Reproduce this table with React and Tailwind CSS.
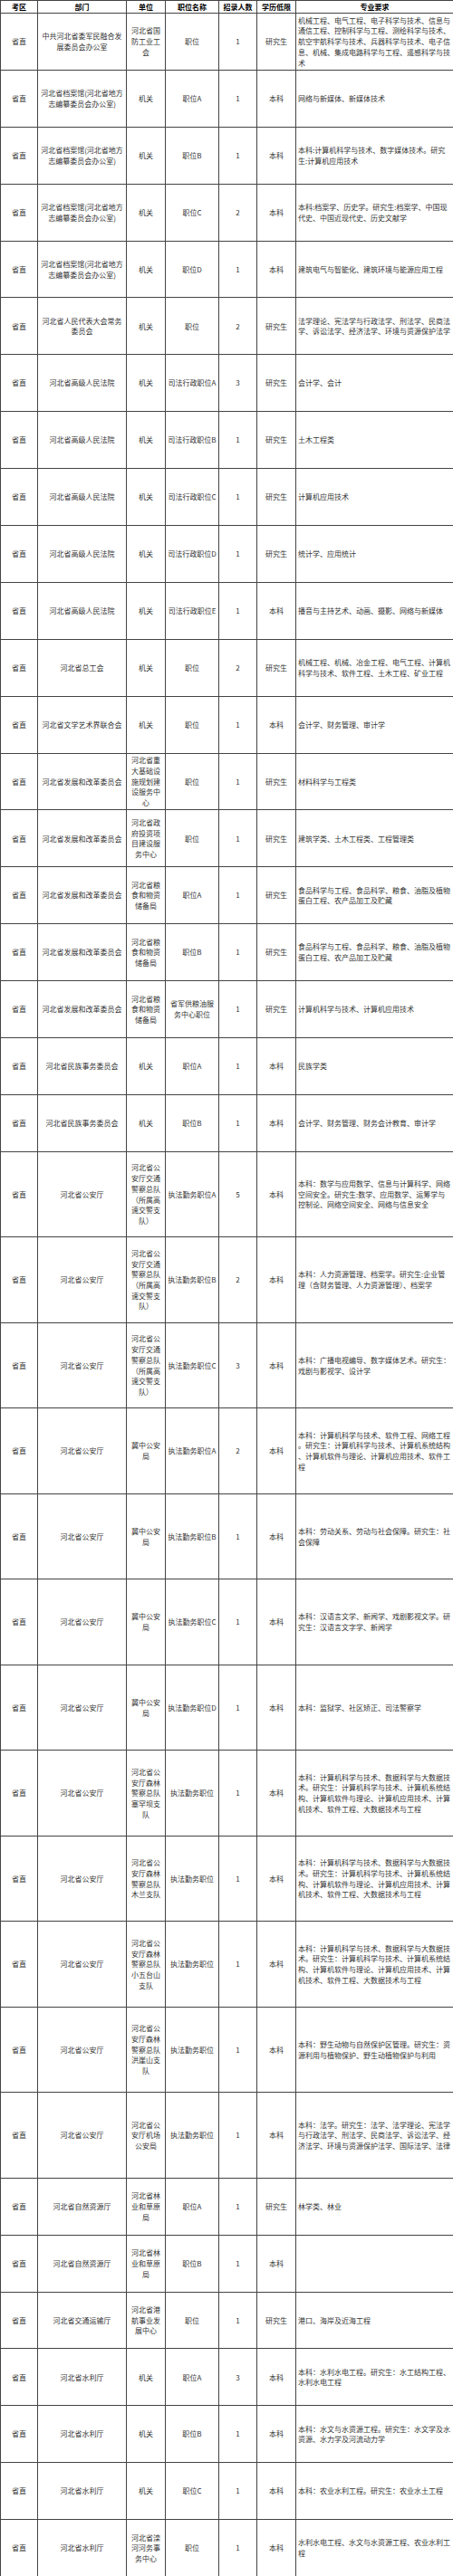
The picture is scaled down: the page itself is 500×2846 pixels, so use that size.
import React from "react";

// 每行: [部门, 单位, 职位名称, 招录人数, 学历低限, 专业要求, 高行]
// 多行文字用 "/" 分隔，按原表手动断行
const DANG = "河北省档案馆(河北省地方/志编纂委员会办公室)";
const FAGAI = "河北省发展和改革委员会";
const LIANG = "河北省粮/食和物资/储备局";
const JIAOJING = "河北省公/安厅交通/警察总队/（所属高/速交警支/队）";
const JIZHONG = "冀中公安/局";
const SENLIN_MAJOR =
  "本科：计算机科学与技术、数据科学与大数据技/术。研究生：计算机科学与技术、计算机系统结/构、计算机软件与理论、计算机应用技术、计算/机技术、软件工程、大数据技术与工程";

const rows = [
  ["中共河北省委军民融合发/展委员会办公室", "河北省国/防工业工/会", "职位", "1", "研究生", "机械工程、电气工程、电子科学与技术、信息与/通信工程、控制科学与工程、测绘科学与技术、/航空宇航科学与技术、兵器科学与技术、电子信/息、机械、集成电路科学与工程、遥感科学与技/术"],
  [DANG, "机关", "职位A", "1", "本科", "网络与新媒体、新媒体技术"],
  [DANG, "机关", "职位B", "1", "本科", "本科:计算机科学与技术、数字媒体技术。研究/生:计算机应用技术"],
  [DANG, "机关", "职位C", "2", "本科", "本科:档案学、历史学。研究生:档案学、中国现/代史、中国近现代史、历史文献学"],
  [DANG, "机关", "职位D", "1", "本科", "建筑电气与智能化、建筑环境与能源应用工程"],
  ["河北省人民代表大会常务/委员会", "机关", "职位", "2", "研究生", "法学理论、宪法学与行政法学、刑法学、民商法/学、诉讼法学、经济法学、环境与资源保护法学"],
  ["河北省高级人民法院", "机关", "司法行政职位A", "3", "研究生", "会计学、会计"],
  ["河北省高级人民法院", "机关", "司法行政职位B", "1", "研究生", "土木工程类"],
  ["河北省高级人民法院", "机关", "司法行政职位C", "1", "研究生", "计算机应用技术"],
  ["河北省高级人民法院", "机关", "司法行政职位D", "1", "研究生", "统计学、应用统计"],
  ["河北省高级人民法院", "机关", "司法行政职位E", "1", "本科", "播音与主持艺术、动画、摄影、网络与新媒体"],
  ["河北省总工会", "机关", "职位", "2", "研究生", "机械工程、机械、冶金工程、电气工程、计算机/科学与技术、软件工程、土木工程、矿业工程"],
  ["河北省文学艺术界联合会", "机关", "职位", "1", "本科", "会计学、财务管理、审计学"],
  [FAGAI, "河北省重/大基础设/施规划建/设服务中/心", "职位", "1", "研究生", "材料科学与工程类"],
  [FAGAI, "河北省政/府投资项/目建设服/务中心", "职位", "1", "研究生", "建筑学类、土木工程类、工程管理类"],
  [FAGAI, LIANG, "职位A", "1", "研究生", "食品科学与工程、食品科学、粮食、油脂及植物/蛋白工程、农产品加工及贮藏"],
  [FAGAI, LIANG, "职位B", "1", "研究生", "食品科学与工程、食品科学、粮食、油脂及植物/蛋白工程、农产品加工及贮藏"],
  [FAGAI, LIANG, "省军供粮油服/务中心职位", "1", "研究生", "计算机科学与技术、计算机应用技术"],
  ["河北省民族事务委员会", "机关", "职位A", "1", "本科", "民族学类"],
  ["河北省民族事务委员会", "机关", "职位B", "1", "本科", "会计学、财务管理、财务会计教育、审计学"],
  ["河北省公安厅", JIAOJING, "执法勤务职位A", "5", "本科", "本科：数学与应用数学、信息与计算科学、网络/空间安全。研究生:数学、应用数学、运筹学与/控制论、网络空间安全、网络与信息安全", true],
  ["河北省公安厅", JIAOJING, "执法勤务职位B", "2", "本科", "本科：人力资源管理、档案学。研究生:企业管/理（含财务管理、人力资源管理）、档案学", true],
  ["河北省公安厅", JIAOJING, "执法勤务职位C", "3", "本科", "本科：广播电视编导、数字媒体艺术。研究生：/戏剧与影视学、设计学", true],
  ["河北省公安厅", JIZHONG, "执法勤务职位A", "2", "本科", "本科：计算机科学与技术、软件工程、网络工程/。研究生：计算机科学与技术、计算机系统结构/、计算机软件与理论、计算机应用技术、软件工/程", true],
  ["河北省公安厅", JIZHONG, "执法勤务职位B", "1", "本科", "本科：劳动关系、劳动与社会保障。研究生：社/会保障", true],
  ["河北省公安厅", JIZHONG, "执法勤务职位C", "1", "本科", "本科：汉语言文学、新闻学、戏剧影视文学。研/究生：汉语言文字学、新闻学", true],
  ["河北省公安厅", JIZHONG, "执法勤务职位D", "1", "本科", "本科：监狱学、社区矫正、司法警察学", true],
  ["河北省公安厅", "河北省公/安厅森林/警察总队/塞罕坝支/队", "执法勤务职位", "1", "本科", SENLIN_MAJOR, true],
  ["河北省公安厅", "河北省公/安厅森林/警察总队/木兰支队", "执法勤务职位", "1", "本科", SENLIN_MAJOR, true],
  ["河北省公安厅", "河北省公/安厅森林/警察总队/小五台山/支队", "执法勤务职位", "1", "本科", SENLIN_MAJOR, true],
  ["河北省公安厅", "河北省公/安厅森林/警察总队/洪崖山支/队", "执法勤务职位", "1", "本科", "本科：野生动物与自然保护区管理。研究生：资/源利用与植物保护、野生动植物保护与利用", true],
  ["河北省公安厅", "河北省公/安厅机场/公安局", "执法勤务职位", "1", "本科", "本科：法学。研究生：法学、法学理论、宪法学/与行政法学、刑法学、民商法学、诉讼法学、经/济法学、环境与资源保护法学、国际法学、法律", true],
  ["河北省自然资源厅", "河北省林/业和草原/局", "职位A", "1", "研究生", "林学类、林业"],
  ["河北省自然资源厅", "河北省林/业和草原/局", "职位B", "1", "本科", ""],
  ["河北省交通运输厅", "河北省港/航事业发/展中心", "职位", "1", "研究生", "港口、海岸及近海工程"],
  ["河北省水利厅", "机关", "职位A", "3", "本科", "本科：水利水电工程。研究生：水工结构工程、/水利水电工程"],
  ["河北省水利厅", "机关", "职位B", "1", "本科", "本科：水文与水资源工程。研究生：水文学及水/资源、水力学及河流动力学"],
  ["河北省水利厅", "机关", "职位C", "1", "本科", "本科：农业水利工程。研究生：农业水土工程"],
  ["河北省水利厅", "河北省滦/河河务事/务中心", "职位", "1", "本科", "水利水电工程、水文与水资源工程、农业水利工/程"],
];

const headers = ["考区", "部门", "单位", "职位名称", "招录人数", "学历低限", "专业要求"];

function Lines({ text }) {
  if (!text) return null;
  return (
    <div>
      {text.split("/").map((line, i) => (
        <div key={i} className="whitespace-nowrap">
          {line}
        </div>
      ))}
    </div>
  );
}

function Cell({ children, left }) {
  return (
    <div
      className={
        left
          ? "flex items-center justify-start border-r border-b border-[#444] pl-[2px] overflow-hidden"
          : "flex items-center justify-center text-center border-r border-b border-[#444] overflow-hidden"
      }
    >
      {children}
    </div>
  );
}

export default function App() {
  return (
    <div
      className="w-[500px] bg-white text-[8px] leading-[11.7px] text-[#333]"
      style={{ fontFamily: '"Noto Sans CJK SC", "Noto Sans", sans-serif' }}
    >
      <div className="border-l border-t border-[#444]">
        {/* 表头 */}
        <div className="grid grid-cols-[41px_98px_43px_59px_42px_43px_174px] h-[14px] font-bold text-black">
          {headers.map((h) => (
            <Cell key={h}>{h}</Cell>
          ))}
        </div>

        {rows.map((r, i) => (
          <div
            key={i}
            className={
              r[6]
                ? "grid grid-cols-[41px_98px_43px_59px_42px_43px_174px] h-[94.5px]"
                : "grid grid-cols-[41px_98px_43px_59px_42px_43px_174px] h-[62.9px]"
            }
          >
            <Cell>省直</Cell>
            <Cell>
              <Lines text={r[0]} />
            </Cell>
            <Cell>
              <Lines text={r[1]} />
            </Cell>
            <Cell>
              <Lines text={r[2]} />
            </Cell>
            <Cell>{r[3]}</Cell>
            <Cell>{r[4]}</Cell>
            <Cell left>
              <Lines text={r[5]} />
            </Cell>
          </div>
        ))}
      </div>
    </div>
  );
}
